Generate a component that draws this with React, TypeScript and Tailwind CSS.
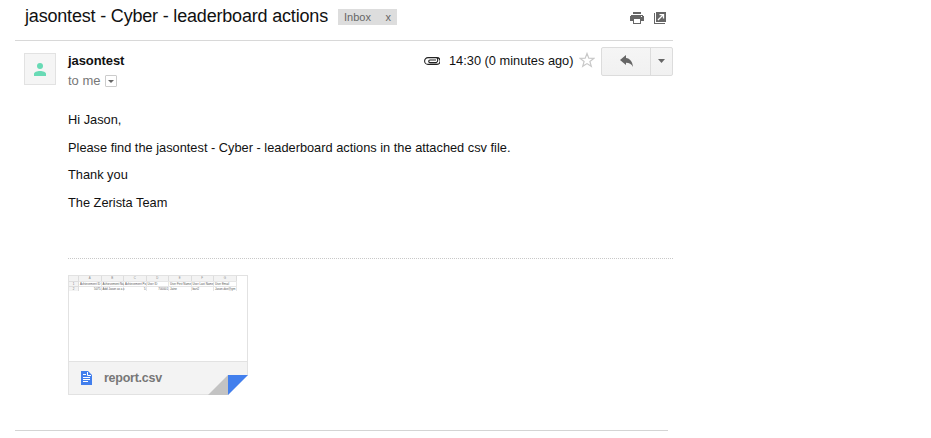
import React from "react";

const columns = ["A", "B", "C", "D", "E", "F", "G"];
const headings = ["Achievement ID", "Achievement Na", "Achievement Po", "User ID", "User First Name", "User Last Name", "User Email"];
const values = ["5075", "Add Jason as a c", "5", "700001", "Jaine", "bart2", "Jason.doe@gm"];
const numeric = [true, false, true, true, false, false, false];

function SheetPreview() {
  return (
    <div className="h-[85px] bg-white text-[2.9px] leading-[5px] text-[#555]">
      <div className="grid w-[168px] grid-cols-[10px_repeat(7,22.5px)] bg-[#f3f3f3] text-center text-[#888]">
        <span className="h-[5px] border-r border-[#ddd]" />
        {columns.map((c) => (
          <span key={c} className="h-[5px] border-r border-[#ddd]">{c}</span>
        ))}
      </div>
      {[headings, values].map((row, r) => (
        <div key={r} className="grid grid-cols-[10px_repeat(7,22.5px)]">
          <span className="h-[5px] border-t border-r border-[#ddd] bg-[#f3f3f3] text-center leading-[5px] text-[#777]">{r + 1}</span>
          {row.map((v, i) => (
            <span
              key={v}
              className={`h-[5px] border-t border-r border-[#e6e6e6] pl-px leading-[5px] whitespace-nowrap ${r === 1 && numeric[i] ? "text-right" : ""}`}
            >
              {v}
            </span>
          ))}
        </div>
      ))}
    </div>
  );
}

export default function App() {
  return (
    <main className="h-[438px] w-[931px] overflow-hidden bg-white pl-[15px] font-['Liberation_Sans',Arial,sans-serif] text-[13px] leading-[18px] text-[#111]">
      <header className="flex h-[41px] w-[658px] items-start border-b border-[#d8d8d8] pt-[5px] pl-[10px]">
        <h1 className="w-[303px] text-[18px] leading-[22px] tracking-[-0.185px] whitespace-nowrap">jasontest - Cyber - leaderboard actions</h1>
        <div className="mt-1 ml-[10px] flex h-4 w-[59px] justify-between bg-[#ddd] px-[6px] text-[11px] leading-4 text-[#666]">
          <span>Inbox</span>
          <span>x</span>
        </div>
        <svg className="mt-[7px] ml-[233px] h-3 w-[14px]" viewBox="0 0 14 12" shapeRendering="crispEdges">
          <path fill="#666" d="M3 0h8v2H3zM1 3h12v1h1v5h-3V6H3v3H0V4h1zM3 6h8v6H3z" />
          <path fill="#fff" d="M4 7h6v4H4zM11 4h1v1h-1z" />
        </svg>
        <svg className="mt-[7px] ml-[10px] h-3 w-3" viewBox="0 0 12 12">
          <path fill="#666" d="M2 0h10v10H2zM0 1h1v10h10v1H0z" />
          <path stroke="#fff" strokeWidth="1.3" fill="none" d="M4 8l5-5M5.5 2.6h4v4" />
        </svg>
      </header>

      <section className="flex h-[69px] w-[658px] pt-[6px] pl-[9px]">
        <div className="mt-[6px] flex h-8 w-8 items-center justify-center border border-[#e2e2e2] bg-[#f5f5f5]">
          <svg className="mt-px h-[13px] w-3" viewBox="0 0 12 13">
            <circle cx="6" cy="3" r="3" fill="#68dab5" />
            <path fill="#68dab5" d="M0 13v-2C0 9 3 8 6 8s6 1 6 3v2z" />
          </svg>
        </div>
        <div className="mt-[5px] ml-3 flex-1">
          <div className="w-[57px] text-[13px] font-bold tracking-[-0.08px] whitespace-nowrap">jasontest</div>
          <div className="mt-[2px] flex items-center text-[#777]">
            <span className="w-8 whitespace-nowrap">to me</span>
            <span className="ml-[5px] flex h-3 w-3 items-center justify-center rounded-[1px] border border-[#ccc]">
              <svg className="h-[3px] w-[6px]" viewBox="0 0 6 3"><path fill="#666" d="M0 0h6L3 3z" /></svg>
            </span>
          </div>
        </div>
        <svg className="mt-[10px] mr-[9px] h-[8px] w-[16px]" viewBox="0 0 16 8" fill="none" stroke="#222" strokeWidth="1.1">
          <path d="M13 7.4H4a3.4 3.4 0 0 1 0-6.8h8.4a3 3 0 0 1 0 5H6a1.3 1.3 0 0 1 0-2.6h6M12.4.6a3.4 3.4 0 0 1 .6 6.8" />
        </svg>
        <span className="mt-[5px] w-[125px] text-[12.8px] whitespace-nowrap">14:30 (0 minutes ago)</span>
        <svg className="mt-[5px] ml-[5px] h-4 w-4" viewBox="0 0 16 16" fill="#fff" stroke="#c8c8c8" strokeWidth="1.2">
          <path d="M8 1.5l1.8 4.7 5 .2-3.9 3.1 1.4 4.8L8 11.6l-4.3 2.7 1.4-4.8-3.9-3.1 5-.2z" />
        </svg>
        <div className="ml-[6px] flex h-[29px] w-[72px] rounded-[2px] border border-[#dcdcdc] bg-linear-to-b from-[#f5f5f5] to-[#f1f1f1]">
          <span className="flex w-[49px] items-center justify-center border-r border-[#dcdcdc]">
            <svg className="mb-px ml-px h-3 w-[13px]" viewBox="0 0 13 12"><path fill="#666" d="M0 5l6-5v3c4 .4 6.7 4 7 9-1.5-3-3.7-4.2-7-4.2V10z" /></svg>
          </span>
          <span className="flex flex-1 items-center justify-center">
            <svg className="mb-px h-1 w-[7px]" viewBox="0 0 7 4"><path fill="#666" d="M0 0h7L3.5 4z" /></svg>
          </span>
        </div>
      </section>

      <section className="ml-[53px] h-[149px] w-[605px] border-b border-dotted border-[#c8c8c8] pt-px text-[12.8px]">
        <p className="h-7">Hi Jason,</p>
        <p className="h-[27px]">Please find the jasontest - Cyber - leaderboard actions in the attached csv file.</p>
        <p className="h-7">Thank you</p>
        <p>The Zerista Team</p>
      </section>

      <article className="relative mt-4 ml-[53px] h-[120px] w-[180px] border border-[#e2e2e2]">
        <SheetPreview />
        <div className="flex h-[33px] items-center border-t border-[#e2e2e2] bg-[#f3f3f3] pl-3">
          <svg className="h-[14px] w-[11px]" viewBox="0 0 11 14">
            <path fill="#427fed" d="M0 0h7l4 4v10H0z" />
            <path stroke="#fff" d="M2 3.5h3M2 6.5h7M2 8.5h7M2 10.5h5M6.5 1v3.5H10" fill="none" />
          </svg>
          <span className="ml-3 text-[12.5px] font-bold tracking-[-0.25px] text-[#777]">report.csv</span>
        </div>
        <svg className="absolute -right-px -bottom-px h-5 w-10" viewBox="0 0 40 20">
          <path fill="#fff" d="M40 0v20H20z" />
          <path fill="#c3c3c3" d="M0 20L20 0v20z" />
          <path fill="#427fed" d="M20 0h20L20 20z" />
        </svg>
      </article>
      <div className="mt-[35px] h-px w-[653px] bg-[#d4d4d4]" />
    </main>
  );
}
